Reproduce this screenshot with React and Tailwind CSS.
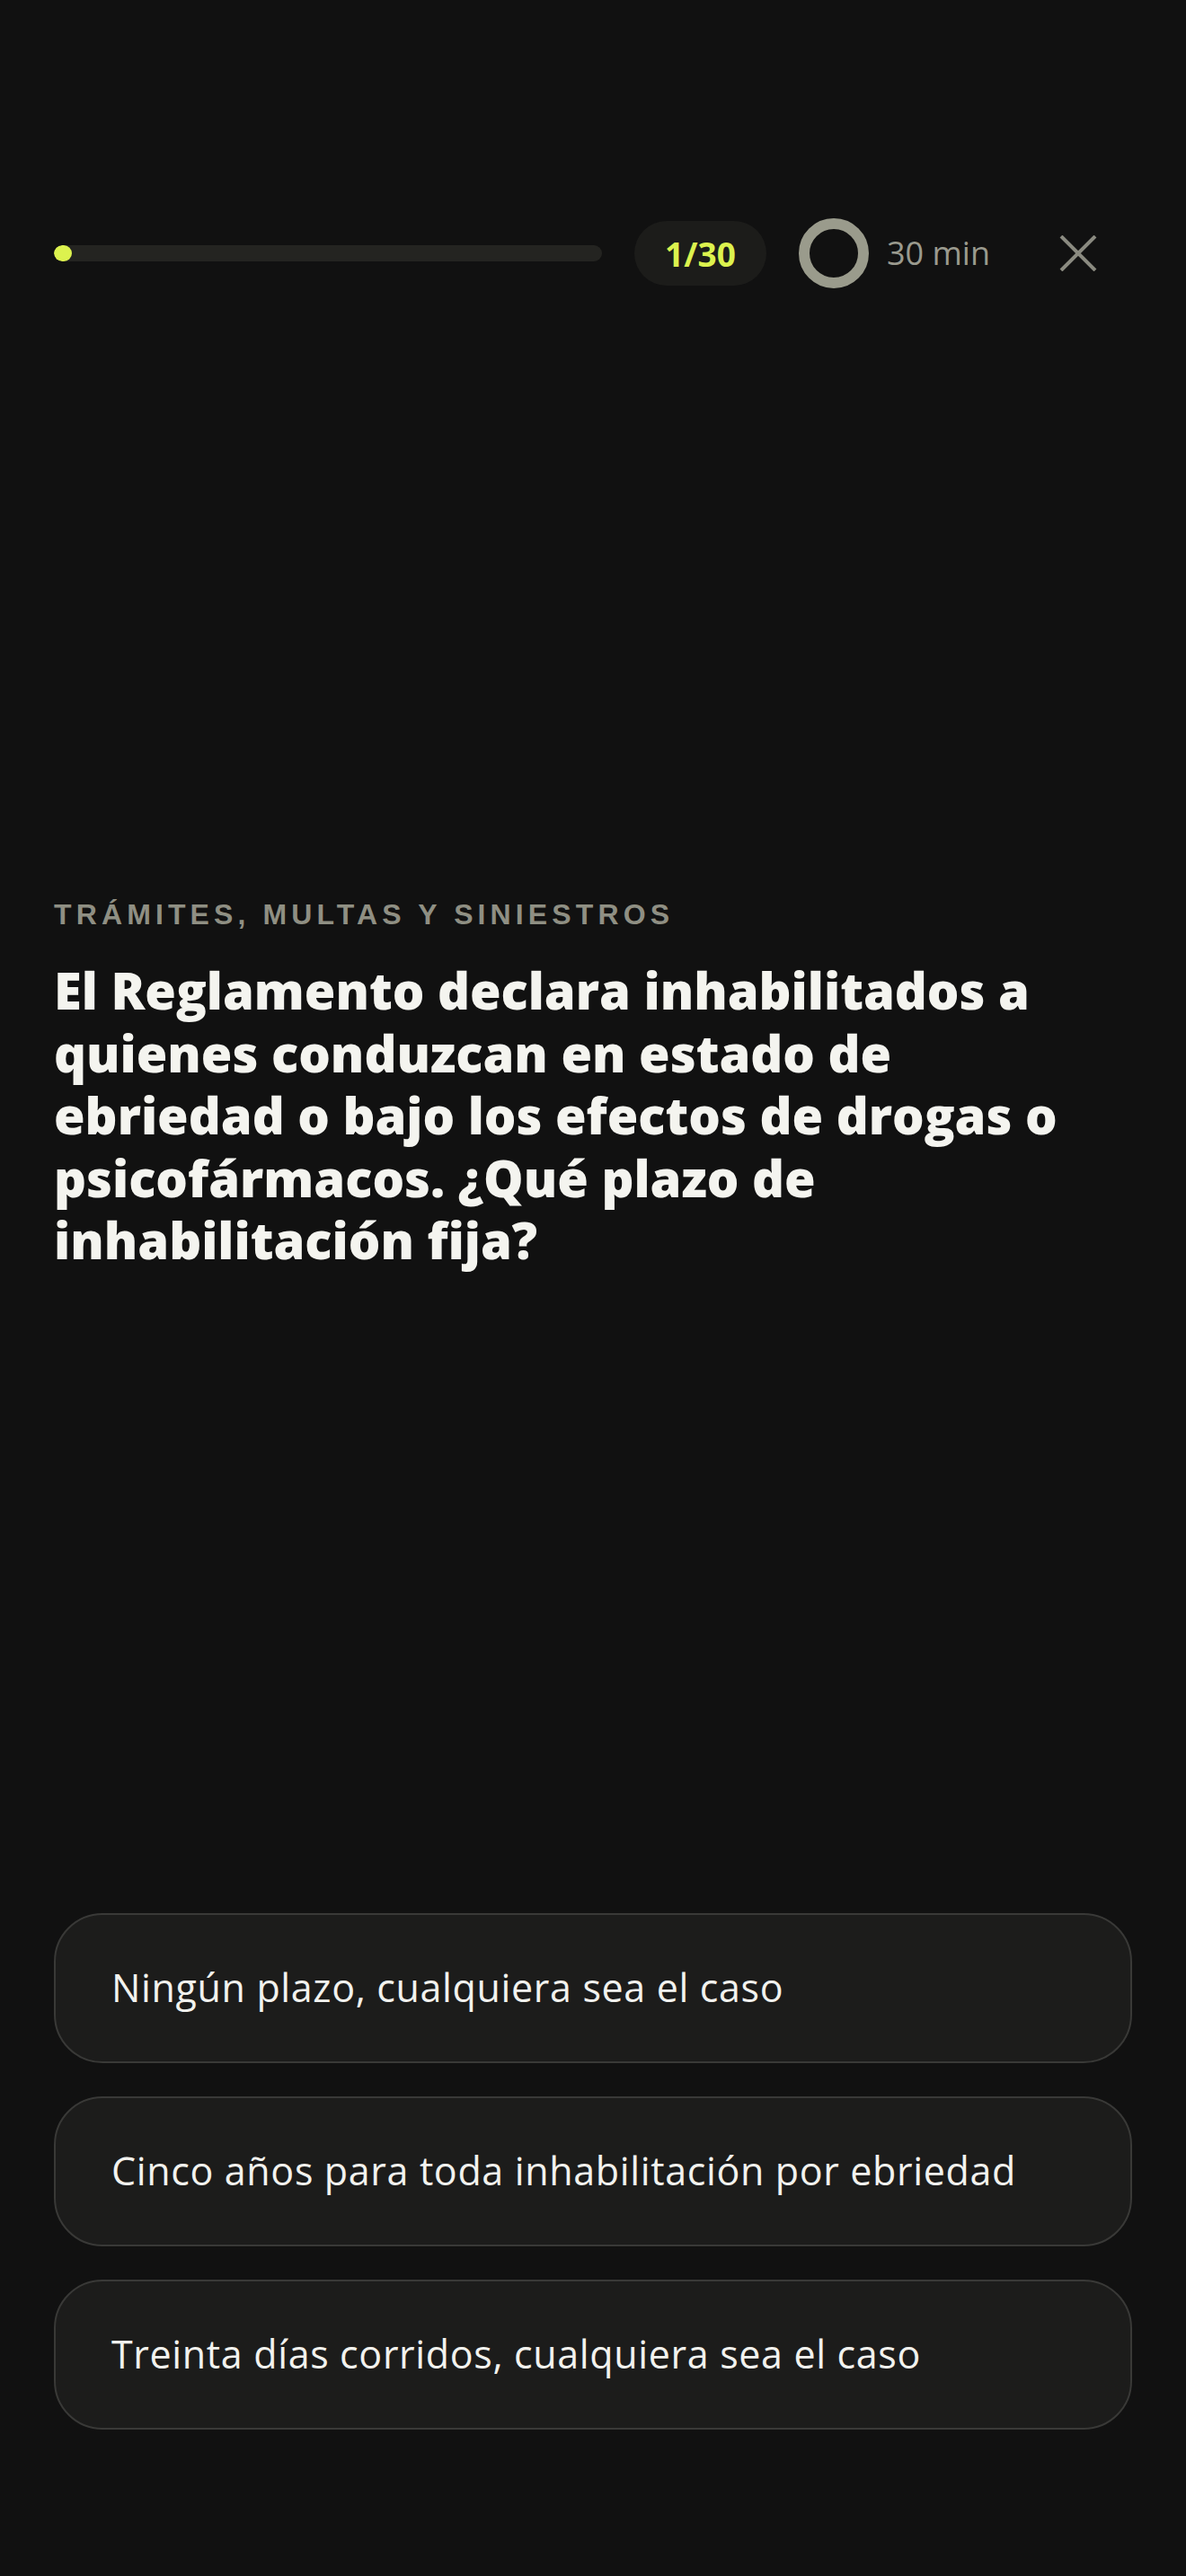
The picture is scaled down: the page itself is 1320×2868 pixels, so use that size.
import React from "react";

const options = [
  "Ningún plazo, cualquiera sea el caso",
  "Cinco años para toda inhabilitación por ebriedad",
  "Treinta días corridos, cualquiera sea el caso",
];

const lines = [
  "El Reglamento declara inhabilitados a",
  "quienes conduzcan en estado de",
  "ebriedad o bajo los efectos de drogas o",
  "psicofármacos. ¿Qué plazo de",
  "inhabilitación fija?",
];

export default function App() {
  return (
    <div
      className="w-full min-h-[2868px] bg-[#111111] text-white"
      style={{ fontFamily: '"Open Sans", "Liberation Sans", Arial, sans-serif' }}
    >
      <div className="px-[60px] pt-[243px]">
        <div className="flex items-center h-[78px]">
          <div className="flex-1 h-[18px] rounded-full bg-[#242421] overflow-hidden">
            <div className="h-full w-[20px] rounded-full bg-[#dcf24e]" />
          </div>
          <div className="ml-[36px] w-[147px] h-[72px] rounded-full bg-[#1c1c1a] flex items-center justify-center text-[37px] font-bold text-[#dcf24e] leading-none">
            1/30
          </div>
          <div className="ml-[36px] w-[78px] h-[78px] rounded-full border-[12px] border-[#9a9b8c]" />
          <div className="ml-[20px] text-[36px] leading-none text-[#9a9a8e]">30 min</div>
          <div className="ml-[77px] mr-[39px] w-[42px] h-[40px] flex items-center justify-center">
            <svg width="42" height="40" viewBox="0 0 42 40" fill="none">
              <path d="M2 1 L40 39 M40 1 L2 39" stroke="#8a8a80" strokeWidth="4" />
            </svg>
          </div>
        </div>

        <div
          className="mt-[681px] text-[32px] leading-[32px] font-bold tracking-[0.16em] text-[#8f8f83]"
          style={{ fontFamily: '"Liberation Sans", Arial, sans-serif' }}
        >
          TRÁMITES, MULTAS Y SINIESTROS
        </div>
        <h1 className="mt-[34px] text-[56px] leading-[69.5px] font-extrabold tracking-[0] text-[#f4f4ef]">
          {lines.map((l) => (
            <span key={l} className="block whitespace-nowrap">
              {l}
            </span>
          ))}
        </h1>

        <div className="mt-[714px] flex flex-col gap-[37px]">
          {options.map((o) => (
            <div
              key={o}
              className="h-[167px] rounded-[54px] border-2 border-[#393937] bg-[#1c1c1b] flex items-center pl-[62px] pr-[40px] text-[43px] tracking-[0.015em] text-[#f2f2ee]"
            >
              {o}
            </div>
          ))}
        </div>
      </div>
    </div>
  );
}
